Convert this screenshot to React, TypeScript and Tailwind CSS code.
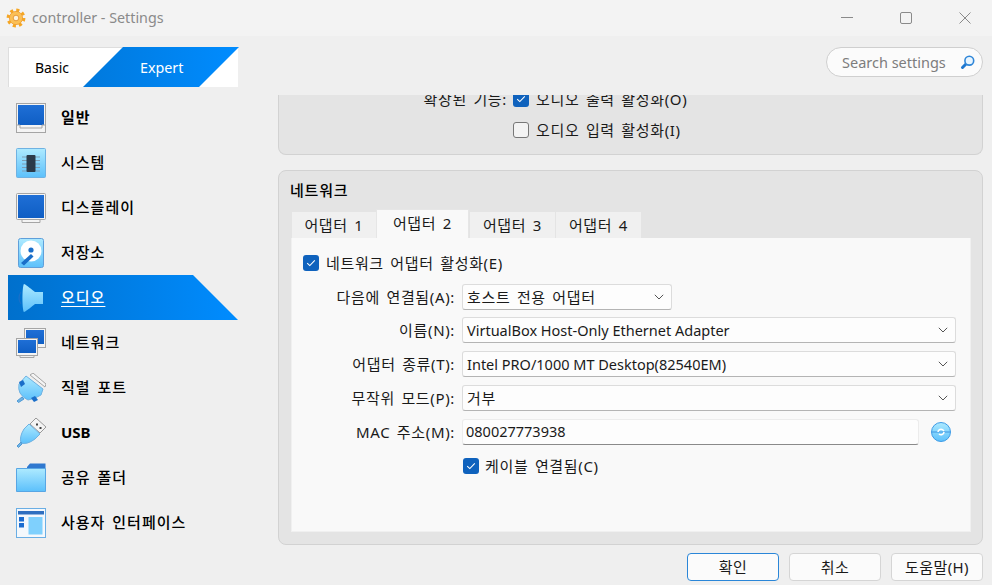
import React from 'react';

const font = "font-['Noto_Sans','Noto_Sans_CJK_KR',sans-serif]";
// Korean runs are wider than the Latin ones in the dialog
const ko = 'text-[15px] tracking-[0.65px] [word-spacing:2px]';

function GearIcon() {
  return (
    <svg width="20" height="20" viewBox="0 0 20 20">
      <circle cx="10" cy="10" r="7.6" fill="none" stroke="#f5a623" strokeWidth="3.6" strokeDasharray="3 2.97" />
      <circle cx="10" cy="10" r="6.6" fill="#fbc056" stroke="#ec9a30" strokeWidth="0.8" />
      <circle cx="10" cy="10" r="2.8" fill="#fdf3dc" stroke="#e08a25" strokeWidth="0.8" />
    </svg>
  );
}

function Check() {
  return (
    <span className="flex h-4 w-4 items-center justify-center rounded-[3px] bg-[#0f62bd]">
      <svg width="10" height="8" viewBox="0 0 10 8" fill="none">
        <path d="M1.2 4.2 3.8 6.6 8.8 1.4" stroke="#fff" strokeWidth="1.1" />
      </svg>
    </span>
  );
}

function Chevron() {
  return (
    <svg width="10" height="6" viewBox="0 0 10 6" fill="none" className="shrink-0">
      <path d="M.8.8 5 5 9.2.8" stroke="#555" strokeWidth="1" />
    </svg>
  );
}

const blue = 'url(#scr)';

function Defs() {
  return (
    <svg width="0" height="0" className="absolute">
      <defs>
        <linearGradient id="scr" x1="0" y1="0" x2="0" y2="1">
          <stop offset="0" stopColor="#1f6fd6" />
          <stop offset="1" stopColor="#0f5ec4" />
        </linearGradient>
        <linearGradient id="sky" x1="0" y1="0" x2="0" y2="1">
          <stop offset="0" stopColor="#aeeaff" />
          <stop offset="1" stopColor="#5cc0fb" />
        </linearGradient>
      </defs>
    </svg>
  );
}

function GeneralIcon() {
  return (
    <svg width="30" height="30" viewBox="0 0 30 30">
      <rect x=".5" y=".5" width="29" height="29" fill="#f4f4f4" stroke="#a5a5a5" />
      <rect x="2" y="2" width="26" height="20" fill={blue} />
      <path d="M1 22h3v3h22v-3h3" fill="none" stroke="#a5a5a5" />
    </svg>
  );
}

function SystemIcon() {
  return (
    <svg width="30" height="30" viewBox="0 0 30 30">
      <rect x=".5" y=".5" width="29" height="29" rx="1" fill="url(#sky)" stroke="#6fb2e2" />
      <path d="M6 9h18M6 12.5h18M6 16h18M6 19.5h18M6 23h18" stroke="#7f9db3" strokeWidth="1" />
      <rect x="10.5" y="7" width="9" height="17" rx="1" fill="#2b3a4a" />
    </svg>
  );
}

function DisplayIcon() {
  return (
    <svg width="30" height="30" viewBox="0 0 30 30">
      <rect x=".5" y=".5" width="29" height="26" rx="1" fill="#f4f4f4" stroke="#a5a5a5" />
      <rect x="2" y="2" width="26" height="23" fill={blue} />
      <path d="M6 27v2.5h18V27" fill="#f4f4f4" stroke="#a5a5a5" />
    </svg>
  );
}

function StorageIcon() {
  return (
    <svg width="26" height="30" viewBox="0 0 26 30">
      <rect x=".5" y=".5" width="25" height="29" rx="2" fill="url(#sky)" stroke="#5f9fda" />
      <circle cx="13" cy="13" r="10.5" fill="#fff" />
      <circle cx="13" cy="12" r="2.6" fill="#1a6ec9" />
      <path d="M3 25 13 16l2.5 2.5L6 27.5z" fill="#1a6ec9" />
    </svg>
  );
}

function AudioIcon() {
  return (
    <svg width="30" height="30" viewBox="0 0 30 30">
      <path d="M5 9Q1 15 5 21" fill="none" stroke="#1b70c8" strokeWidth="1.2" />
      <path d="M8 1c3 1 8 6 11 8h8v12h-8c-3 2-8 7-11 8-2-2-2-26 0-28z" fill="url(#sky)" />
    </svg>
  );
}

function NetworkIcon() {
  return (
    <svg width="30" height="30" viewBox="0 0 30 30">
      <rect x="8.5" y=".5" width="21" height="19" fill="#f4f4f4" stroke="#a5a5a5" />
      <rect x="10" y="2" width="18" height="14" fill={blue} />
      <rect x=".5" y="10.5" width="21" height="17" fill="#f4f4f4" stroke="#a5a5a5" />
      <rect x="2" y="12" width="18" height="13" fill={blue} />
      <path d="M4 28v1.5h14V28" fill="none" stroke="#a5a5a5" />
    </svg>
  );
}

function SerialIcon() {
  return (
    <svg width="30" height="30" viewBox="0 0 30 30">
      <path d="M14 2 17 0 30 11l-1 3z" fill="#f4f4f4" stroke="#a5a5a5" />
      <path d="M10 3 27 16 25 22Q19 26 12 27 7 25 4 20 2 16 3 11z" fill="url(#sky)" stroke="#6fb2e2" />
      <path d="M3 9 7 7 9 11 5 14zM15 25 19 23 22 27 18 29z" fill="#1a6ec9" />
      <path d="M6 24 1 28l1.5 1.5L8 26z" fill="#6fb2e2" stroke="#4f9ad6" />
    </svg>
  );
}

function UsbIcon() {
  return (
    <svg width="30" height="30" viewBox="0 0 30 30">
      <path d="M20 0 30 9l-6 6-10-9z" fill="#f4f4f4" stroke="#999" />
      <rect x="20" y="5.5" width="2" height="2" fill="#444" />
      <rect x="23.5" y="9" width="2" height="2" fill="#444" />
      <path d="M13 6 24 16 19 21Q11 27 5 25 3 19 8 11z" fill="url(#sky)" stroke="#6fb2e2" />
      <path d="M5 24 1 28l1.5 1.5L6 26z" fill="#6fb2e2" stroke="#4f9ad6" />
    </svg>
  );
}

function FolderIcon() {
  return (
    <svg width="30" height="30" viewBox="0 0 30 30">
      <path d="M11 4 14 .5h15.5V6H11z" fill="#2f78cf" />
      <path d="M.5 5.5H29.5V28.5H.5z" fill="url(#sky)" stroke="#58a6e4" />
    </svg>
  );
}

function UiIcon() {
  return (
    <svg width="30" height="30" viewBox="0 0 30 30">
      <rect x=".5" y=".5" width="29" height="29" fill="#f4f8fc" stroke="#6aaee4" />
      <rect x="2" y="3" width="26" height="3.5" fill="#2f6fc0" />
      <rect x="3" y="9" width="5" height="4.5" fill="#1b6cd0" />
      <rect x="3" y="15" width="5" height="4.5" fill="#1b6cd0" />
      <rect x="12.5" y="9" width="14" height="17.5" fill="#7fd0fd" />
    </svg>
  );
}

const pages = [
  { label: '일반', icon: <GeneralIcon />, bold: true },
  { label: '시스템', icon: <SystemIcon /> },
  { label: '디스플레이', icon: <DisplayIcon /> },
  { label: '저장소', icon: <StorageIcon /> },
  { label: '오디오', icon: <AudioIcon />, active: true },
  { label: '네트워크', icon: <NetworkIcon /> },
  { label: '직렬 포트', icon: <SerialIcon /> },
  { label: 'USB', icon: <UsbIcon />, latin: true },
  { label: '공유 폴더', icon: <FolderIcon /> },
  { label: '사용자 인터페이스', icon: <UiIcon /> },
];

function Combo({ value, wide = true, korean }: { value: string; wide?: boolean; korean?: boolean }) {
  return (
    <div
      className={`flex h-[26px] items-center justify-between rounded-[3px] border border-[#dcdcdc] border-b-[#b4b4b4] bg-[#fdfdfd] pl-1 pr-[7px] ${wide ? 'w-[494px]' : 'w-[210px]'}`}
    >
      <span className={`leading-none ${korean ? ko : ''}`}>{value}</span>
      <Chevron />
    </div>
  );
}

function FormRow({ label, children }: { label: string; children: React.ReactNode }) {
  return (
    <div className="flex h-[26px] items-center">
      <span className={`w-[152px] shrink-0 whitespace-nowrap text-right ${ko}`}>{label}</span>
      <div className="ml-[7px] flex items-center">{children}</div>
    </div>
  );
}

function FooterButton({ label, primary }: { label: string; primary?: boolean }) {
  return (
    <button
      type="button"
      className={`h-7 w-[92px] rounded-[4px] border bg-[#fbfbfb] text-[15px] leading-none tracking-[0.4px] ${primary ? 'border-[#2a86d8]' : 'border-[#d5d5d5]'}`}
    >
      {label}
    </button>
  );
}

export default function App() {
  return (
    <div className={`flex h-[585px] w-[992px] flex-col overflow-hidden bg-[#efefef] text-[14.5px] text-[#1a1a1a] ${font}`}>
      <Defs />
      {/* Title bar */}
      <div className="flex h-9 shrink-0 items-center bg-[#f3f3f3] pl-[6px]">
        <GearIcon />
        <span className="ml-[6px] text-[14.3px] text-[#8a8a8a]">controller - Settings</span>
        <div className="ml-auto flex items-center gap-[47px] pr-[21px]">
          <svg width="12" height="12" viewBox="0 0 12 12"><path d="M0 5.5h12" stroke="#8a8a8a" /></svg>
          <svg width="12" height="12" viewBox="0 0 12 12"><rect x=".5" y=".5" width="11" height="11" rx="1.5" fill="none" stroke="#8a8a8a" /></svg>
          <svg width="12" height="12" viewBox="0 0 12 12"><path d="M.5.5l11 11M11.5.5l-11 11" stroke="#8a8a8a" /></svg>
        </div>
      </div>

      <div className="flex min-h-0 flex-1">
        {/* Sidebar */}
        <div className="w-[278px] shrink-0 pl-2 pt-[11px]">
          <div className="relative h-10 w-[230px] border border-[#dedede] border-r-0 border-b-0 bg-white">
            <span className="absolute left-[26px] top-[13px] text-[14px] leading-none text-black">Basic</span>
            <div className="absolute -left-px -top-px flex h-10 w-[231px] items-center bg-linear-to-r from-[#0070cc] to-[#008cff] pl-[132px] pt-[2px] text-[14.3px] text-white [clip-path:polygon(115px_0,100%_0,191px_100%,75px_100%)]">
              Expert
            </div>
          </div>
          <div className="mt-2 flex flex-col">
            {pages.map((page) => (
              <div key={page.label} className="relative flex h-[45px] w-[230px] items-center">
                {page.active && (
                  <div className="absolute inset-0 bg-linear-to-r from-[#0070cc] to-[#008cff] [clip-path:polygon(0_0,185px_0,100%_100%,0_100%)]" />
                )}
                <div className="relative flex w-[53px] justify-center pr-[7px]">{page.icon}</div>
                <span
                  className={`relative text-[15px] leading-none ${page.active ? 'text-white underline underline-offset-[3px]' : 'text-black'} ${page.bold || page.latin ? 'font-bold' : 'font-medium'} ${page.latin ? '' : 'tracking-[1px] [word-spacing:2px]'}`}
                >
                  {page.label}
                </span>
              </div>
            ))}
          </div>
        </div>

        {/* Main column */}
        <div className="flex min-w-0 flex-1 flex-col pr-[9px] pt-[11px]">
          <div className="flex h-[30px] w-[157px] shrink-0 items-center justify-between self-end rounded-full border border-[#cfcfcf] bg-[#fbfbfb] pl-[15px] pr-[7px]">
            <span className="pt-[2px] text-[#7d7d7d]">Search settings</span>
            <svg width="15" height="15" viewBox="0 0 15 15" fill="none">
              <path d="M6 9 2.5 12.5" stroke="#1f78d0" strokeWidth="3" strokeLinecap="round" />
              <circle cx="9.3" cy="5.7" r="4.4" fill="#e8f5ff" stroke="#2f86d8" strokeWidth="1.6" />
            </svg>
          </div>

          <div className="mt-[18px] flex h-[450px] shrink-0 flex-col gap-[15px] overflow-hidden">
            {/* Audio group, scrolled off at the top */}
            <div className="flex h-[60px] shrink-0 flex-col justify-end rounded-b-lg border border-t-0 border-[#d2d2d2] bg-[#e4e4e4] pb-4">
              <div className="flex h-4 items-center">
                <span className={`w-[228px] whitespace-nowrap text-right ${ko}`}>확장된 기능:</span>
                <span className="ml-[6px]"><Check /></span>
                <span className={`ml-[7px] whitespace-nowrap ${ko}`}>오디오 출력 활성화(O)</span>
              </div>
              <div className="mt-[15px] flex h-4 items-center">
                <span className="ml-[234px] h-4 w-4 rounded-[3px] border border-[#777] bg-[#f3f3f3]" />
                <span className={`ml-[7px] whitespace-nowrap ${ko}`}>오디오 입력 활성화(I)</span>
              </div>
            </div>

            {/* Network group */}
            <div className="flex h-[375px] shrink-0 flex-col rounded-lg border border-[#d2d2d2] bg-[#e4e4e4] px-3">
              <div className="-ml-px mt-[10px] h-[19px] text-[15px] font-medium leading-[19px] tracking-[0.8px] text-black">네트워크</div>
              <div className={`mt-[9px] flex items-end pl-px ${ko}`}>
                <div className="flex h-[26px] w-[84px] items-center justify-center bg-[#f0f0f0]">어댑터 1</div>
                <div className="flex h-[29px] w-[93px] items-center justify-center border border-b-0 border-[#e6e6e6] bg-[#f9f9f9] pb-[2px]">어댑터 2</div>
                <div className="ml-px flex h-[26px] w-[85px] items-center justify-center bg-[#f0f0f0]">어댑터 3</div>
                <div className="ml-px flex h-[26px] w-[85px] items-center justify-center bg-[#f0f0f0]">어댑터 4</div>
              </div>
              <div className="flex h-[294px] w-[680px] flex-col border border-t-0 border-[#f0f0f0] bg-[#f9f9f9] pl-[11px]">
                <div className="mt-[17px] flex h-4 items-center gap-[7px]">
                  <Check />
                  <span className={ko}>네트워크 어댑터 활성화(E)</span>
                </div>
                <div className="mt-[13px] flex flex-col gap-2">
                  <div className="-mb-px">
                    <FormRow label="다음에 연결됨(A):"><Combo value="호스트 전용 어댑터" wide={false} korean /></FormRow>
                  </div>
                  <FormRow label="이름(N):"><Combo value="VirtualBox Host-Only Ethernet Adapter" /></FormRow>
                  <FormRow label="어댑터 종류(T):"><Combo value="Intel PRO/1000 MT Desktop(82540EM)" /></FormRow>
                  <FormRow label="무작위 모드(P):"><Combo value="거부" korean /></FormRow>
                  <FormRow label="MAC 주소(M):">
                    <div className="flex h-[26px] w-[457px] items-center rounded-[3px] border border-[#ececec] border-b-[#8a8a8a] bg-[#fdfdfd] pl-[3px]">080027773938</div>
                    <svg width="20" height="20" viewBox="0 0 20 20" className="ml-3">
                      <circle cx="10" cy="10" r="9.5" fill="url(#sky)" stroke="#3e9be6" />
                      <path d="M1 10h18" stroke="#2f86d8" strokeWidth=".8" />
                      <path d="M7 10a3 3 0 0 1 5-2l1 1M13 10a3 3 0 0 1-5 2" fill="none" stroke="#fff" strokeWidth="1.6" />
                    </svg>
                  </FormRow>
                </div>
                <div className="ml-[160px] mt-[13px] flex h-4 items-center gap-[6px]">
                  <Check />
                  <span className={ko}>케이블 연결됨(C)</span>
                </div>
              </div>
            </div>
          </div>

          {/* Footer buttons */}
          <div className="mt-2 flex justify-end gap-[10px]">
            <FooterButton label="확인" primary />
            <FooterButton label="취소" />
            <FooterButton label="도움말(H)" />
          </div>
        </div>
      </div>
    </div>
  );
}
